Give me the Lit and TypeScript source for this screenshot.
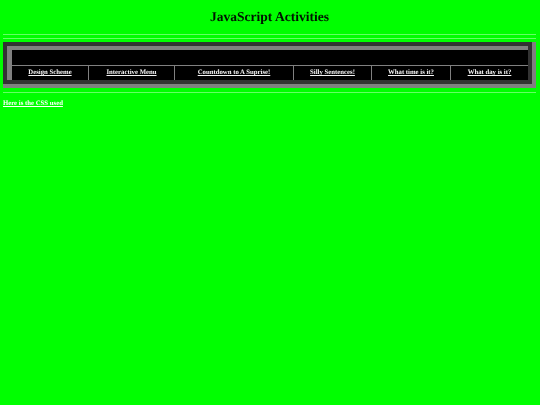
import { LitElement, html, css } from "lit";
import { customElement } from "lit/decorators.js";

const CELLS: [string, number][] = [
  ["Design Scheme", 76],
  ["Interactive Menu", 86],
  ["Countdown to A Suprise!", 119],
  ["Silly Sentences!", 78],
  ["What time is it?", 79],
  ["What day is it?", 78],
];

@customElement("app-root")
export class AppRoot extends LitElement {
  static styles = css`
    :host {
      display: block;
      min-height: 405px;
      background: #00ff00;
      font-family: "Liberation Serif", "Times New Roman", serif;
      text-rendering: geometricPrecision;
      padding: 0 4px 0 3px;
      box-sizing: border-box;
      filter: blur(0.4px);
    }
    h1 {
      margin: 0;
      padding-top: 9px;
      height: 34px;
      box-sizing: border-box;
      font-size: 13.5px;
      line-height: 15px;
      font-weight: bold;
      text-align: center;
      color: #001400;
    }
    .rule {
      height: 1px;
      background: #66ff66;
    }
    .rule.second {
      margin-top: 3px;
    }
    .panel {
      margin-top: 3px;
      height: 46px;
      box-sizing: border-box;
      padding: 4px 0 0 4px;
      background: #333;
      border-right: 4px solid #808080;
      border-bottom: 4px solid #808080;
    }
    .panel-inner {
      height: 100%;
      box-sizing: border-box;
      padding: 4px 0 0 5px;
      background: #808080;
      border-right: 4px solid #333;
      border-bottom: 4px solid #333;
    }
    .panel-body {
      height: 100%;
      background: #000;
      display: flex;
      flex-direction: column;
      justify-content: flex-end;
    }
    .row {
      display: flex;
      height: 15px;
      border-top: 1px solid #808080;
      box-sizing: border-box;
    }
    .cell {
      box-sizing: border-box;
      display: flex;
      align-items: center;
      justify-content: center;
      padding-bottom: 1px;
      border-left: 1px solid #808080;
      font-size: 6.75px;
      font-weight: bold;
    }
    .cell:first-child {
      border-left: 0;
    }
    a {
      color: #f4f4f4;
      text-decoration: underline;
    }
    .rule.bottom {
      margin-top: 4px;
    }
    .css-link {
      margin-top: 7px;
      font-size: 6.75px;
      line-height: 8px;
      font-weight: bold;
    }
    .css-link a {
      color: #fff;
    }
  `;

  render() {
    return html`
      <h1>JavaScript Activities</h1>
      <div class="rule"></div>
      <div class="rule second"></div>
      <div class="panel">
        <div class="panel-inner">
          <div class="panel-body">
            <div class="row">
              ${CELLS.map(
                ([label, width]) => html`<div class="cell" style="width:${width}px"><a href="#">${label}</a></div>`
              )}
            </div>
          </div>
        </div>
      </div>
      <div class="rule bottom"></div>
      <div class="css-link"><a href="#">Here is the CSS used</a></div>
    `;
  }
}
